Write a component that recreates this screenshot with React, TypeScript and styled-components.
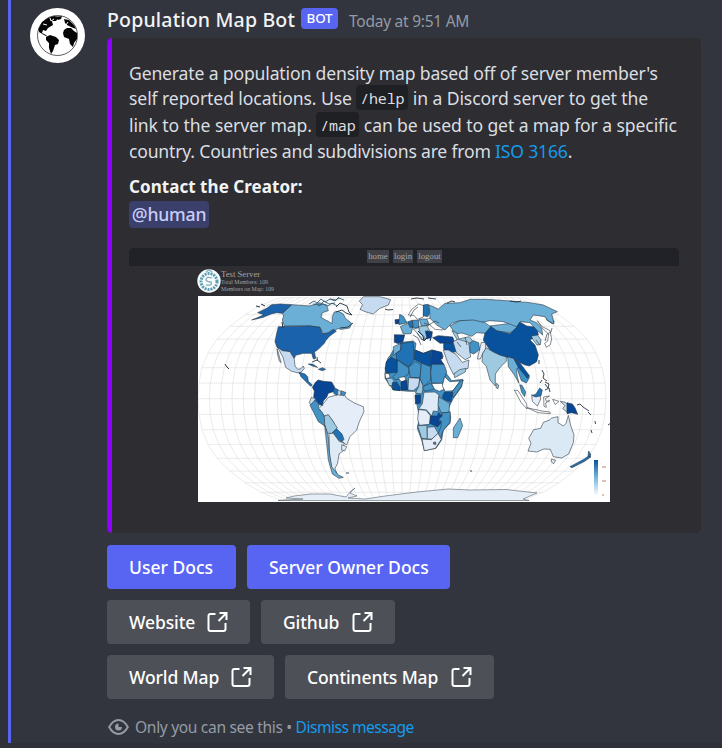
import React from "react";
import styled, { createGlobalStyle } from "styled-components";

const GlobalStyle = createGlobalStyle`
  * { box-sizing: border-box; }
  html, body { margin: 0; background: #313338; }
  body { width: 722px; height: 748px; overflow: hidden; font-family: "Noto Sans", "Open Sans", sans-serif; }
`;

const Page = styled.div`
  height: 748px;
  padding-bottom: 5px;
  background: #303138;
`;

const Message = styled.main`
  display: flex;
  height: 743px;
  margin-left: 8px;
  padding-left: 19px;
  border-left: 3px solid #5865f2;
  background: #32353e;
`;

const AvatarColumn = styled.div`
  width: 77px;
  flex: none;
  padding-top: 8px;
`;

const Avatar = styled.svg`
  display: block;
  width: 55px;
  height: 55px;
`;

const Body = styled.div`
  width: 594px;
`;

const Header = styled.header`
  display: flex;
  height: 38px;
  align-items: flex-start;
  white-space: nowrap;
`;

const Author = styled.span`
  width: 194px;
  padding-top: 6px;
  color: #f2f3f5;
  font-size: 19.5px;
  font-weight: 500;
  line-height: 28px;
  letter-spacing: 0.18px;
`;

const BotTag = styled.span`
  display: flex;
  width: 37px;
  height: 21px;
  margin-top: 8px;
  padding-bottom: 1px;
  align-items: center;
  justify-content: center;
  border-radius: 4px;
  background: #5865f2;
  color: #fff;
  font-size: 13.4px;
  font-weight: 500;
  letter-spacing: -0.2px;
`;

const Time = styled.span`
  padding: 7px 0 0 11px;
  color: #949ba4;
  font-size: 15.5px;
  line-height: 28px;
  letter-spacing: -0.25px;
`;

const Embed = styled.article`
  width: 594px;
  height: 495px;
  padding: 22px 22px 0 17px;
  border-left: 5px solid #8f00ff;
  border-radius: 5px;
  background: #2d2d32;
`;

const Line = styled.div<{ $track: number; $height?: number }>`
  height: ${(p) => p.$height ?? 26}px;
  color: #dbdee1;
  font-size: 17.6px;
  line-height: 26px;
  letter-spacing: ${(p) => p.$track}px;
  white-space: nowrap;
`;

const Code = styled.code<{ $width: number }>`
  display: inline-block;
  width: ${(p) => p.$width}px;
  height: 25px;
  border-radius: 4px;
  background: #1f2024;
  font-family: "Noto Sans Mono", "DejaVu Sans Mono", monospace;
  font-size: 15px;
  line-height: 26px;
  letter-spacing: -0.15px;
  text-align: center;
  vertical-align: top;
`;

const Link = styled.a`
  color: #149bec;
`;

const FieldName = styled.div`
  margin-top: 10px;
  color: #f2f3f5;
  font-size: 17px;
  font-weight: 700;
  line-height: 26px;
  letter-spacing: 0.05px;
`;

const Mention = styled.span`
  display: block;
  width: 80px;
  height: 27px;
  margin-top: 1px;
  border-radius: 4px;
  background: #3b3f6b;
  color: #c9cdfb;
  font-size: 17.6px;
  font-weight: 500;
  line-height: 26px;
  letter-spacing: -0.2px;
  text-align: center;
`;

const Preview = styled.section`
  width: 550px;
  height: 254px;
  margin-top: 20px;
  overflow: hidden;
  border-radius: 5px;
  font-family: "Liberation Serif", serif;
`;

const PreviewNav = styled.nav`
  display: flex;
  height: 18px;
  padding: 2px 0 2px 238px;
  gap: 4px;
  background: #212227;
`;

const NavItem = styled.span<{ $width: number }>`
  width: ${(p) => p.$width}px;
  height: 13px;
  background: #404146;
  color: #a2a2a5;
  font-size: 8.8px;
  line-height: 12px;
  text-align: center;
`;

const ServerInfo = styled.div`
  display: flex;
  height: 30px;
  padding: 3px 0 0 68px;
  color: #a2a2a4;
`;

const ServerLogo = styled.svg`
  width: 24px;
  height: 24px;
`;

const ServerText = styled.div`
  padding-top: 1px;
  font-size: 5.8px;
  line-height: 7px;
  white-space: nowrap;
`;

const ServerName = styled.div`
  font-size: 8.7px;
  line-height: 9px;
`;

const Map = styled.svg`
  display: block;
  width: 412px;
  height: 206px;
  margin-left: 69px;
  background: #fff;
`;

const ButtonRow = styled.div<{ $first?: boolean }>`
  display: flex;
  margin-top: ${(p) => (p.$first ? 12 : 11)}px;
  gap: 11px;
`;

const Button = styled.button<{ $width: number; $primary?: boolean }>`
  display: flex;
  width: ${(p) => p.$width}px;
  height: 44px;
  padding: 0 22px;
  align-items: center;
  justify-content: space-between;
  border: 0;
  border-radius: 4px;
  background: ${(p) => (p.$primary ? "#5865f2" : "#4e5058")};
  color: #fff;
  font-family: inherit;
  font-size: 17.5px;
  font-weight: 500;
  letter-spacing: ${(p) => (p.$primary ? 0 : -0.12)}px;
  white-space: nowrap;
`;

const LaunchSvg = styled.svg`
  width: 22px;
  height: 22px;
  flex: none;
`;

const Footer = styled.footer`
  display: flex;
  height: 28px;
  margin-top: 14px;
  align-items: center;
  color: #949ba4;
  font-size: 15.6px;
  letter-spacing: -0.34px;
  white-space: nowrap;
`;

const DismissLink = styled(Link)`
  letter-spacing: -0.51px;
`;

const Eye = styled.svg`
  width: 21px;
  height: 18px;
  margin: 0 6px 0 1px;
`;

const Launch = () => (
  <LaunchSvg viewBox="0 0 22 22" fill="none" stroke="#fff" strokeWidth="2">
    <path d="M9.5 3H4.5Q2.5 3 2.5 5V18Q2.5 20 4.5 20H17.5Q19.5 20 19.5 18V12M13.5 2H20.5V9M20 2.5L12.5 10" />
  </LaunchSvg>
);

type Shape = [fill: string, points: string];

const americas: Shape[] = [
  ["#6baed6", "290,44 345,48 372,38 395,45 400,62 382,68 378,82 392,90 400,94 411,101 412,80 418,66 430,64 445,72 452,86 470,100 464,114 440,118 428,116 405,130 385,132 375,112 345,108 268,108 262,90 266,78 262,70"],
  ["#1a62ac", "250,110 345,108 375,112 382,132 400,128 415,118 424,124 404,138 392,152 388,160 370,178 358,186 362,205 355,207 350,190 325,190 302,196 298,205 285,185 262,182 246,172 240,155 245,130"],
  ["#1a62ac", "262,70 290,44 255,42 230,44 215,55 200,62 188,68 207,74 190,82 170,90 205,82 228,72 245,68"],
  ["#c6dbef", "248,172 262,182 285,185 298,208 300,228 308,238 318,236 325,228 328,236 315,250 290,244 272,232 264,202"],
  ["#c6dbef", "246,176 252,195 258,218 253,213 248,195"],
  ["#2171b5", "312,247 330,252 338,260 340,274 352,285 347,289 330,272 318,260"],
  ["#2171b5", "340,222 352,222 368,232 352,228"],
  ["#2171b5", "370,238 382,233 392,238 382,242"],
  ["#e5edf8", "382,345 400,322 425,315 445,310 455,325 480,340 505,350 507,365 493,395 485,420 465,440 455,465 440,455 438,440 425,420 415,395 400,375 388,378 372,355"],
  ["#084594", "352,292 362,276 370,270 385,274 410,276 418,290 415,305 400,310 395,322 385,333 382,347 372,343 360,328 356,320 358,303"],
  ["#2171b5", "417,292 430,300 425,316 416,310"],
  ["#c6dbef", "428,300 438,304 438,316 428,314"],
  ["#4292c6", "439,302 453,308 447,317 438,315"],
  ["#c6dbef", "349,322 362,326 357,339 348,347 343,337"],
  ["#4292c6", "345,346 360,330 372,345 370,355 382,368 390,385 388,407 370,395 355,365"],
  ["#9ecae1", "388,378 400,374 415,395 427,414 410,430 398,430 389,405"],
  ["#2171b5", "413,427 425,416 441,432 447,448 440,456 431,450"],
  ["#deebf7", "402,431 415,430 433,455 447,458 445,482 432,492 428,520 420,535 427,554 410,535 404,500"],
  ["#deebf7", "440,464 455,470 449,483 440,480"],
  ["#6baed6", "389,405 400,440 402,480 410,530 430,555 445,562 432,565 412,552 400,510 395,460"],
];

const africaEurope: Shape[] = [
  ["#c6dbef", "88,34 98,44 90,58 105,65 130,72 148,56 175,45 182,29 150,20 100,20"],
  ["#4292c6", "215,157 250,153 258,160 255,180 280,190 305,180 335,188 340,200 330,202 345,245 365,272 398,268 395,290 370,325 355,355 362,380 360,400 340,420 335,450 318,475 283,482 275,450 262,415 268,380 260,340 255,318 262,304 235,304 215,302 190,300 165,265 165,250 170,215 190,180"],
  ["#6baed6", "190,170 213,160 212,180 182,202 168,222 175,202 190,192"],
  ["#2171b5", "213,160 249,156 252,178 252,210 236,231 200,208 198,190 213,180"],
  ["#08519c", "255,180 280,190 302,182 305,228 287,225 253,208"],
  ["#084594", "305,180 335,187 338,206 330,208 342,223 305,223"],
  ["#08519c", "182,202 202,210 202,247 170,250 165,237 169,215"],
  ["#4292c6", "202,210 237,234 236,252 218,263 197,270 188,260 202,247"],
  ["#4292c6", "236,232 257,214 274,225 270,263 241,262"],
  ["#4292c6", "274,219 302,230 302,270 280,290 270,265"],
  ["#4292c6", "305,223 342,223 350,246 338,280 305,279 302,248"],
  ["#fff", "165,250 178,252 180,263 168,266"],
  ["#9ecae1", "169,266 184,264 192,272 187,286 178,287"],
  ["#08519c", "187,278 200,276 210,292 210,302 188,299"],
  ["#fff", "205,263 224,260 228,272 213,275"],
  ["#084594", "213,276 230,270 233,300 213,300"],
  ["#c6dbef", "236,263 269,265 266,288 250,302 234,300"],
  ["#9ecae1", "270,266 280,290 276,312 256,309 266,290"],
  ["#4292c6", "277,291 302,279 314,297 284,304"],
  ["#fff", "305,281 337,280 342,298 328,304 314,298"],
  ["#fff", "344,260 359,275 390,273 369,302 345,304 337,287"],
  ["#4292c6", "392,273 400,270 394,289 370,323 365,307"],
  ["#084594", "256,316 272,315 271,340 256,342"],
  ["#deebf7", "282,307 315,306 327,315 324,365 310,363 305,378 290,360 266,357 277,341"],
  ["#08519c", "343,307 369,307 363,335 343,329 337,321"],
  ["#6baed6", "326,320 342,330 359,340 357,367 334,369 324,345"],
  ["#e5edf8", "266,359 288,361 301,377 299,403 268,406 263,387"],
  ["#084594", "302,378 322,378 326,368 337,378 325,393 335,395 323,411 299,400"],
  ["#4292c6", "335,369 361,366 360,397 340,421 330,448 325,430 333,409 334,395 326,387 337,378"],
  ["#9ecae1", "263,407 291,406 292,447 275,445"],
  ["#c6dbef", "292,412 313,410 325,430 306,447 292,447"],
  ["#e5edf8", "276,447 304,449 324,430 334,448 316,475 283,482"],
  ["#6f7f90", "310,457 317,456 318,463 311,463"],
  ["#6baed6", "390,384 398,407 383,443 370,443 370,414"],
  ["#084594", "193,134 224,135 219,155 205,161 193,157"],
  ["#6baed6", "211,110 235,98 248,113 243,131 220,132"],
  ["#2171b5", "233,95 248,91 249,112 240,112"],
  ["#4292c6", "247,91 266,90 267,113 250,114"],
  ["#6baed6", "268,87 292,87 296,106 274,108"],
  ["#fff", "235,75 245,58 266,42 281,47 280,81 262,88 252,76"],
  ["#2171b5", "280,45 295,43 299,69 293,80 280,77"],
  ["#084594", "195,89 207,88 207,101 196,102"],
  ["#4292c6", "209,73 220,79 231,98 207,104"],
  ["#deebf7", "250,117 267,113 288,144 280,151 264,132"],
  ["#9ecae1", "266,110 291,107 301,125 289,147 270,127"],
  ["#084594", "286,123 307,125 305,142 291,147"],
  ["#fff", "290,88 309,81 348,107 338,120 315,118 299,104"],
  ["#084594", "308,143 325,137 368,141 374,157 357,164 344,159 330,160"],
  ["#08519c", "341,158 373,160 381,184 360,190 341,178"],
  ["#c6dbef", "340,180 355,180 378,193 397,217 417,210 414,235 387,246 370,253 354,220"],
  ["#9ecae1", "372,251 389,239 408,235 406,246 374,263"],
  ["#6baed6", "298,45 325,57 345,40 390,38 420,28 470,28 530,32 600,38 640,45 682,65 665,72 670,90 672,102 655,93 645,80 610,75 600,90 620,98 635,115 638,135 620,120 600,98 570,95 560,110 520,95 480,92 440,100 420,92 390,92 365,100 355,110 345,120 320,105 300,85"],
  ["#6baed6", "360,107 390,92 430,90 465,98 482,110 465,130 440,128 425,139 396,129 376,132"],
  ["#9ecae1", "366,122 381,129 387,147 418,140 428,153 415,162 382,151"],
  ["#c6dbef", "369,155 385,148 416,157 422,201 405,209 379,188"],
  ["#4292c6", "419,160 430,152 446,158 449,179 431,192 420,187"],
];

const asiaPacific: Shape[] = [
  ["#6baed6", "60,108 91,104 145,97 151,112 120,128 82,124"],
  ["#08519c", "40,151 46,123 60,108 80,122 120,131 140,112 145,94 170,108 200,112 205,134 180,150 195,165 205,195 200,215 178,228 165,225 145,215 130,205 110,202 85,195 60,180"],
  ["#e5edf8", "34,157 46,158 47,177 38,190 31,207 22,207"],
  ["#9ecae1", "38,190 49,173 68,185 91,196 109,201 109,214 92,230 76,252 76,288 60,270 49,229 36,215"],
  ["#9ecae1", "79,280 86,285 84,296 78,293"],
  ["#6baed6", "113,200 132,206 147,231 139,239 142,260 147,280 133,255 115,230"],
  ["#4292c6", "141,235 152,230 178,263 169,279 154,272"],
  ["#08519c", "132,207 150,219 179,258 172,265 145,232"],
  ["#9ecae1", "184,138 203,135 213,150 211,164 201,165 190,151"],
  ["#fff", "202,92 217,110 240,122 245,147 241,164 229,172 224,160 233,153 236,132 218,116"],
  ["#4292c6", "226,75 240,78 253,95 247,101 231,91"],
  ["#fff", "133,300 144,302 170,342 171,357 153,337"],
  ["#4292c6", "149,284 156,286 167,306 164,320 155,307"],
  ["#e5edf8", "185,314 194,317 212,308 211,330 202,348 187,334"],
  ["#2171b5", "187,317 198,312 209,294 217,300 213,317 198,321"],
  ["#fff", "171,353 188,357 216,363 240,366 241,371 204,368"],
  ["#fff", "221,321 238,318 226,326 229,334 239,332 227,339 229,352 222,349"],
  ["#fff", "248,328 267,334 256,344"],
  ["#c6dbef", "271,334 283,336 292,341 292,367 278,356 285,347"],
  ["#084594", "291,338 307,342 315,353 323,373 305,368 291,371"],
  ["#dbe9f5", "191,419 212,415 220,397 237,391 245,384 264,380 264,398 280,408 288,400 295,376 302,406 312,435 310,458 296,492 275,504 250,500 241,478 222,477 200,486 174,483 183,460 176,445"],
  ["#dbe9f5", "244,507 257,511 251,521 244,516"],
  ["#2171b5", "300,530 343,507 358,496 361,502 344,514 306,533"],
  ["#2171b5", "356,483 362,493 361,502 354,497"],
];

const Countries = ({ shapes, x }: { shapes: Shape[]; x: number }) => (
  <g transform={`translate(${x} 290) scale(.33333)`} stroke="#29333d" strokeWidth="1.7" strokeLinejoin="round">
    {shapes.map(([fill, points], i) => (
      <polygon key={i} fill={fill} points={points} />
    ))}
  </g>
);

const latOffsets = [0, 15.6, 31, 45.7, 59.6, 72.4, 84, 93.6, 101];
const latWidths = [204, 203, 200, 194, 185, 172, 157, 141, 122];

const Graticule = () => {
  const rows = Array.from({ length: 17 }, (_, i) => i - 8);
  const sign = (n: number) => (n < 0 ? -1 : 1);
  const meridians = Array.from({ length: 37 }, (_, i) => (i - 18) / 18);
  return (
    <g fill="none" stroke="#dedede" strokeWidth=".6">
      {rows.map((r) => {
        const n = Math.abs(r);
        const y = 398.7 + sign(r) * latOffsets[n];
        return <path key={r} d={`M${402 - latWidths[n]} ${y}H${402 + latWidths[n]}`} />;
      })}
      {meridians.map((m) => (
        <polyline
          key={m}
          points={rows
            .map((r) => `${402 + m * latWidths[Math.abs(r)]},${398.7 + sign(r) * latOffsets[Math.abs(r)]}`)
            .join(" ")}
        />
      ))}
    </g>
  );
};

const WorldMap = () => (
  <Map viewBox="198 296 412 206">
    <defs>
      <linearGradient id="scale" x1="0" y1="0" x2="0" y2="1">
        <stop stopColor="#08519c" />
        <stop offset=".45" stopColor="#6baed6" />
        <stop offset="1" stopColor="#f7fbff" />
      </linearGradient>
    </defs>
    <Graticule />
    <path
      d="M278 500.5L303 499L286 498L294 496L311 494L330 494L346 497L351 491L355 488L350 493L357 496L348 498L365 499L385 496L417 492L448 489L470 490L506 489.5L519 491L537 493L523 499L529 500.5Z"
      fill="#e5eef7"
      stroke="#59636b"
      strokeWidth=".6"
    />
    <Countries shapes={asiaPacific} x={470} />
    <Countries shapes={africaEurope} x={330} />
    <Countries shapes={americas} x={195} />
    <g fill="none" stroke="#26343e" strokeWidth=".9">
      <path d="M309 304l5-3 3 2 4-4 4 3 5-3 5 2 4-4M313 304l7 1 4-4 5 3 6-1M318 306l5-2 5 2 4-3 5 3M330 299l6 1 3-2 5 2" stroke="#355a72" />
      <path d="M336 307l4-4 7 3 2 6 3 3-6-2-4-3-6 2M340 328l8-1 5-4M385 309l3 1 5-.5M411 299l6-1 7 1M428 298l8 1M447 303l5-2 3 1M510 301l7 1 4-1M312 362l5-2 4 3M317 357l.5 4" />
      <path d="M256 306l4 1M261 304l4 2M282 322l1 6M225 364l2 3 2 2" strokeWidth="1" />
      <path d="M542 370l2 4-1 4 4 3M545 382l4 2-1 4-3-4M540 383l2-3M545 390l4-2 1 4M577 405l3-1 3 3 6 4M588 412l3 3M591 430l1 3M608 425l3-2M595 421l.5 3M539 360v4M346 473h3M470 471h2" />
      <path d="M545 341l2-7 4-2 1-4M536 340l4 5M413 335l5 3 3 7M417 333l5 7 3-2M427 330l5 5M424 323l5 2 6-4 4 2M410 317l4-7 4-3M465 337l2 8M457 342l4 5" strokeWidth=".65" />
      <path d="M427 332l1 4 3 2-1 3M418 331l5 5 1 5 3-3" stroke="#07346d" strokeWidth="1" />
    </g>
    <rect x="594" y="460" width="4" height="35" fill="url(#scale)" />
    <g stroke="#ddc1b3" strokeWidth="2">
      <path d="M602 467h4M602 481h4M602 495h2" />
    </g>
  </Map>
);

const Globe = () => (
  <Avatar viewBox="0 0 55 55">
    <circle cx="27.5" cy="27.5" r="27.5" fill="#fff" />
    <circle cx="27.5" cy="27.5" r="20" fill="#fff" stroke="#151515" strokeWidth=".7" />
    <path d="M8.5 21L12 14 18 10 24 8 29 9 26 13 22 13 23 17 18 20 16 23 13 22 12 25 16 27 18 29 14 27 9 24ZM16 29L20 27 26 29 29 32 28 36 25 37 23 43 21 46 19 40 19 35 16 32ZM33 25L34 22 37 20 41 20 44 23 47 25 47 31 44 35 43 39 40 36 39 31 34 29ZM26 9L32 8 31 11 28 12ZM34 11L39 12 44 17 46 21 41 19 37 17 35 15Z" fill="#050505" />
    <path d="M20 10l1 3 3-2M38 14l-2 3M13 16l4 1" stroke="#fff" fill="none" />
  </Avatar>
);

export default function App() {
  return (
    <>
      <GlobalStyle />
      <Page>
        <Message>
          <AvatarColumn>
            <Globe />
          </AvatarColumn>
          <Body>
            <Header>
              <Author>Population Map Bot</Author>
              <BotTag>BOT</BotTag>
              <Time>Today at 9:51 AM</Time>
            </Header>
            <Embed>
              <Line $track={-0.165} $height={25}>Generate a population density map based off of server member's</Line>
              <Line $track={-0.1} $height={27}>
                self reported locations. Use <Code $width={52}>/help</Code> in a Discord server to get the
              </Line>
              <Line $track={-0.11}>
                link to the server map. <Code $width={43}>/map</Code> can be used to get a map for a specific
              </Line>
              <Line $track={-0.2}>
                country. Countries and subdivisions are from <Link>ISO 3166</Link>.
              </Line>
              <FieldName>Contact the Creator:</FieldName>
              <Mention>@human</Mention>
              <Preview>
                <PreviewNav>
                  <NavItem $width={22}>home</NavItem>
                  <NavItem $width={20}>login</NavItem>
                  <NavItem $width={25}>logout</NavItem>
                </PreviewNav>
                <ServerInfo>
                  <ServerLogo viewBox="0 0 24 24">
                    <circle cx="12" cy="12" r="11.7" fill="#f7fbfc" />
                    <circle cx="12" cy="12.5" r="8" fill="none" stroke="#5d9cb2" strokeWidth="3" strokeDasharray="2 1" />
                    <path d="M15 9Q9 7 9 11Q10 13 14 13Q16 17 9 16M9 3l3-2 3 2" fill="none" stroke="#7facbd" strokeWidth="1.3" />
                  </ServerLogo>
                  <ServerText>
                    <ServerName>Test Server</ServerName>
                    <div>Total Members: 109</div>
                    <div>Members on Map: 109</div>
                  </ServerText>
                </ServerInfo>
                <WorldMap />
              </Preview>
            </Embed>
            <ButtonRow $first>
              <Button $width={129} $primary>User Docs</Button>
              <Button $width={203} $primary>Server Owner Docs</Button>
            </ButtonRow>
            <ButtonRow>
              <Button $width={143}>Website<Launch /></Button>
              <Button $width={134}>Github<Launch /></Button>
            </ButtonRow>
            <ButtonRow>
              <Button $width={167}>World Map<Launch /></Button>
              <Button $width={209}>Continents Map<Launch /></Button>
            </ButtonRow>
            <Footer>
              <Eye viewBox="0 0 21 18" fill="none" stroke="#949ba4" strokeWidth="2">
                <path d="M1.2 9Q5 2 10.5 2T19.8 9Q16 16 10.5 16T1.2 9Z" />
                <path d="M10.5 5.5V9H14A3.5 3.5 0 1 1 10.5 5.5Z" fill="#949ba4" stroke="none" />
              </Eye>
              <span>Only you can see this • <DismissLink>Dismiss message</DismissLink></span>
            </Footer>
          </Body>
        </Message>
      </Page>
    </>
  );
}
